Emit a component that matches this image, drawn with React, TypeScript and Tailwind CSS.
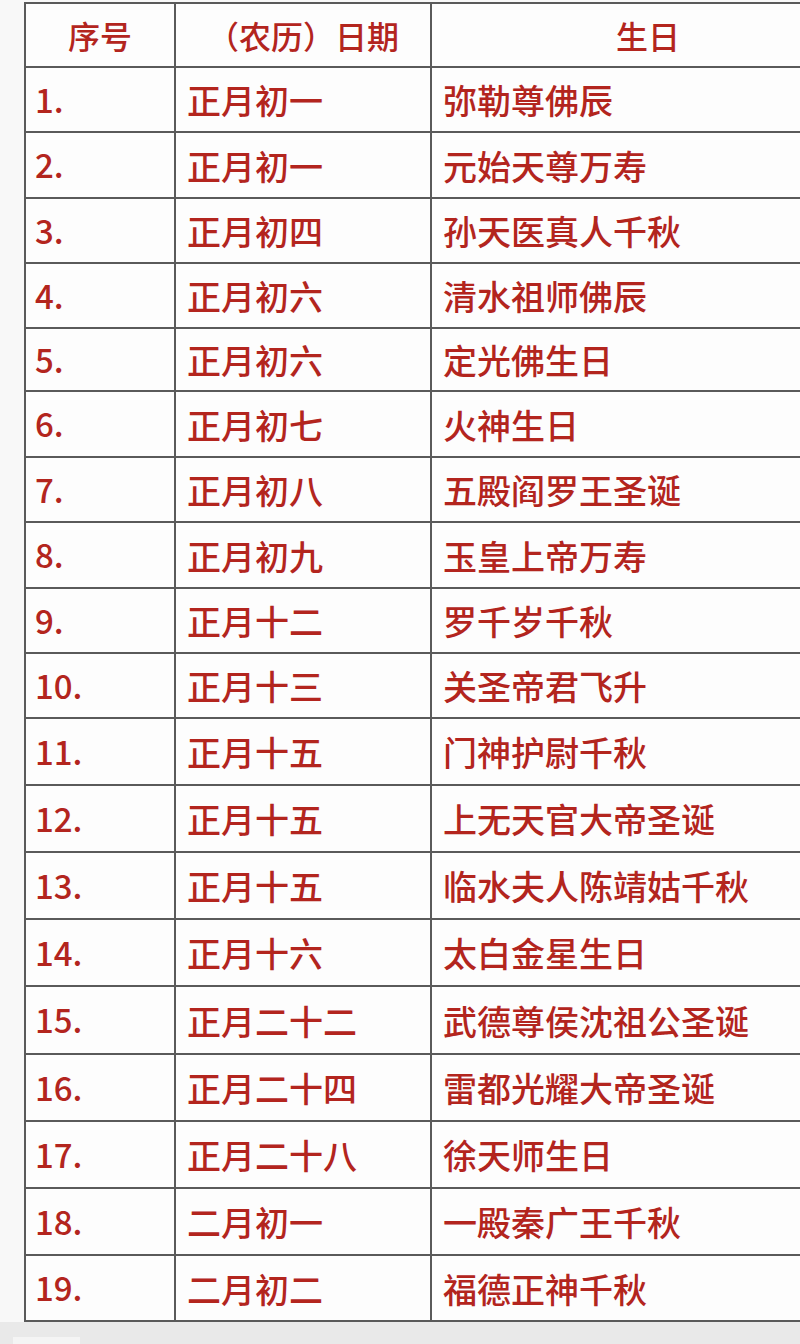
// 农历神佛诞辰表 — a plain bordered table, cropped on the right like the photo.

const rows: { no: string; date: string; name: string; h: string }[] = [
  { no: '1.', date: '正月初一', name: '弥勒尊佛辰', h: 'h-[65px]' },
  { no: '2.', date: '正月初一', name: '元始天尊万寿', h: 'h-[66px]' },
  { no: '3.', date: '正月初四', name: '孙天医真人千秋', h: 'h-[65px]' },
  { no: '4.', date: '正月初六', name: '清水祖师佛辰', h: 'h-[65px]' },
  { no: '5.', date: '正月初六', name: '定光佛生日', h: 'h-[63px]' },
  { no: '6.', date: '正月初七', name: '火神生日', h: 'h-[66px]' },
  { no: '7.', date: '正月初八', name: '五殿阎罗王圣诞', h: 'h-[65px]' },
  { no: '8.', date: '正月初九', name: '玉皇上帝万寿', h: 'h-[66px]' },
  { no: '9.', date: '正月十二', name: '罗千岁千秋', h: 'h-[65px]' },
  { no: '10.', date: '正月十三', name: '关圣帝君飞升', h: 'h-[65px]' },
  { no: '11.', date: '正月十五', name: '门神护尉千秋', h: 'h-[67px]' },
  { no: '12.', date: '正月十五', name: '上无天官大帝圣诞', h: 'h-[67px]' },
  { no: '13.', date: '正月十五', name: '临水夫人陈靖姑千秋', h: 'h-[67px]' },
  { no: '14.', date: '正月十六', name: '太白金星生日', h: 'h-[67px]' },
  { no: '15.', date: '正月二十二', name: '武德尊侯沈祖公圣诞', h: 'h-[68px]' },
  { no: '16.', date: '正月二十四', name: '雷都光耀大帝圣诞', h: 'h-[67px]' },
  { no: '17.', date: '正月二十八', name: '徐天师生日', h: 'h-[67px]' },
  { no: '18.', date: '二月初一', name: '一殿秦广王千秋', h: 'h-[67px]' },
  { no: '19.', date: '二月初二', name: '福德正神千秋', h: 'h-[66px]' },
]

const font = 'font-["Noto_Sans_CJK_SC","Noto_Sans",sans-serif]'
const cell = 'flex items-center border-r-2 border-[#5a5a5a]'

export default function App() {
  return (
    <div
      className={`flex h-[1344px] w-[800px] flex-col overflow-hidden bg-[#f8f8f8] ${font} font-medium text-[#b3251e]`}
    >
      <div className="flex-none pl-[24px] pt-[2px]">
        <div className="w-[840px] border-l-2 border-t-2 border-[#5a5a5a] bg-[#fdfdfd]">
          <div className="grid h-[64px] grid-cols-[150px_256px_1fr] border-b-2 border-[#5a5a5a] text-[32px]">
            <div className={`${cell} justify-center`}>序号</div>
            <div className={`${cell} justify-center`}>（农历）日期</div>
            <div className="flex items-center justify-center">生日</div>
          </div>
          {rows.map((r) => (
            <div
              key={r.no}
              className={`grid ${r.h} grid-cols-[150px_256px_1fr] border-b-2 border-[#5a5a5a] text-[34px]`}
            >
              <div className={`${cell} pl-[9px] text-[33px]`}>{r.no}</div>
              <div className={`${cell} pl-[11px]`}>{r.date}</div>
              <div className="flex items-center pl-[11px]">{r.name}</div>
            </div>
          ))}
        </div>
      </div>
      <div className="relative flex-1 bg-[#e9e9e9]">
        <div className="absolute bottom-0 left-[13px] h-[7px] w-[67px] bg-[#f4f4f4]" />
      </div>
    </div>
  )
}
